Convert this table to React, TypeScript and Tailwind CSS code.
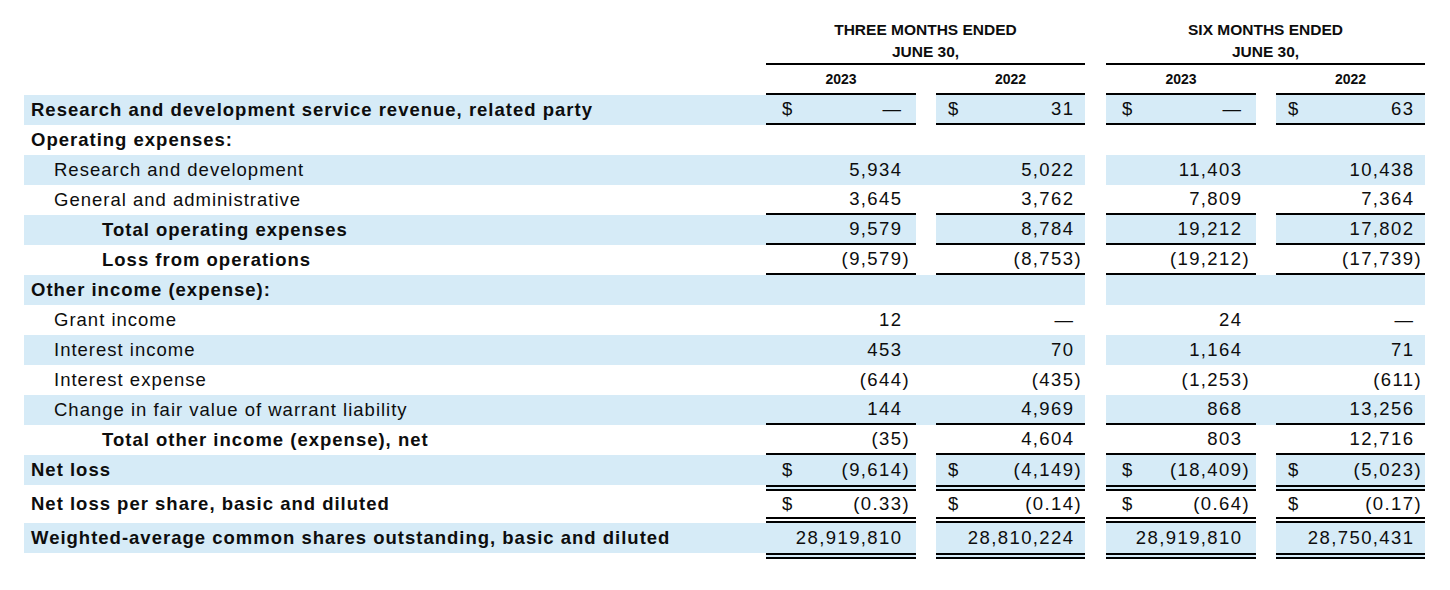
import React from 'react';

type Border = 'none' | 'single' | 'double';

type Row = {
  label: string;
  level: 0 | 1 | 2;
  bold?: boolean;
  blue?: boolean;
  dollar?: boolean;
  vals: string[];
  border?: Border;
  gapBlue?: boolean;
  h?: number;
};

const rows: Row[] = [
  { label: 'Research and development service revenue, related party', level: 0, bold: true, blue: true, dollar: true, vals: ['—', '31', '—', '63'], border: 'single' },
  { label: 'Operating expenses:', level: 0, bold: true, vals: [] },
  { label: 'Research and development', level: 1, blue: true, gapBlue: true, vals: ['5,934', '5,022', '11,403', '10,438'] },
  { label: 'General and administrative', level: 1, vals: ['3,645', '3,762', '7,809', '7,364'], border: 'single' },
  { label: 'Total operating expenses', level: 2, bold: true, blue: true, vals: ['9,579', '8,784', '19,212', '17,802'], border: 'single' },
  { label: 'Loss from operations', level: 2, bold: true, vals: ['(9,579)', '(8,753)', '(19,212)', '(17,739)'], border: 'single' },
  { label: 'Other income (expense):', level: 0, bold: true, blue: true, gapBlue: true, vals: [] },
  { label: 'Grant income', level: 1, vals: ['12', '—', '24', '—'] },
  { label: 'Interest income', level: 1, blue: true, gapBlue: true, vals: ['453', '70', '1,164', '71'] },
  { label: 'Interest expense', level: 1, vals: ['(644)', '(435)', '(1,253)', '(611)'] },
  { label: 'Change in fair value of warrant liability', level: 1, blue: true, gapBlue: true, vals: ['144', '4,969', '868', '13,256'], border: 'single' },
  { label: 'Total other income (expense), net', level: 2, bold: true, vals: ['(35)', '4,604', '803', '12,716'], border: 'single' },
  { label: 'Net loss', level: 0, bold: true, blue: true, dollar: true, vals: ['(9,614)', '(4,149)', '(18,409)', '(5,023)'], border: 'double' },
  { label: 'Net loss per share, basic and diluted', level: 0, bold: true, dollar: true, vals: ['(0.33)', '(0.14)', '(0.64)', '(0.17)'], border: 'double', h: 26 },
  { label: 'Weighted-average common shares outstanding, basic and diluted', level: 0, bold: true, blue: true, vals: ['28,919,810', '28,810,224', '28,919,810', '28,750,431'], border: 'double' },
];

// widths / paddings for the four number columns
const cols = [
  { w: 'w-[150px]', pl: 'pl-[16px]', pr: 'pr-[6px]' },
  { w: 'w-[149px]', pl: 'pl-[12px]', pr: 'pr-[3px]' },
  { w: 'w-[150px]', pl: 'pl-[16px]', pr: 'pr-[6px]' },
  { w: 'w-[149px]', pl: 'pl-[12px]', pr: 'pr-[3px]' },
];
const gaps = ['w-[20px]', 'w-[21px]', 'w-[20px]'];

const indent = ['pl-[7px]', 'pl-[30px]', 'pl-[78px]'];

const heights: Record<string, string> = {
  '30-none': 'h-[30px]',
  '30-single': 'h-[30px] border-b-2 border-black',
  '30-double': 'h-[36px] border-b-[6px] border-double border-black',
  '26-double': 'h-[32px] border-b-[6px] border-double border-black',
};

const contentH: Record<number, string> = { 30: 'h-[30px]', 26: 'h-[26px]' };

const Num = ({ v }: { v: string }) => (
  <span className="tracking-[1.4px]">
    {v}
    {!v.endsWith(')') && <span className="invisible">)</span>}
  </span>
);

const DataRow = ({ r }: { r: Row }) => {
  const h = r.h ?? 30;
  const cellCls = heights[`${h}-${r.border ?? 'none'}`];
  const bg = r.blue ? 'bg-[#d6ebf7]' : '';
  return (
    <div className="flex items-start">
      <div
        className={`w-[742px] ${contentH[h]} flex items-center ${indent[r.level]} ${bg} tracking-[1px] ${
          r.bold ? 'font-bold' : ''
        }`}
      >
        {r.label}
      </div>
      {cols.map((c, i) => (
        <React.Fragment key={i}>
          <div className={`${c.w} ${cellCls} ${bg} ${c.pl} ${c.pr} flex items-center justify-between`}>
            <span>{r.dollar ? '$' : ''}</span>
            {r.vals[i] && <Num v={r.vals[i]} />}
          </div>
          {i < 3 && <div className={`${gaps[i]} ${contentH[h]} ${r.gapBlue && i !== 1 ? bg : ''}`} />}
        </React.Fragment>
      ))}
    </div>
  );
};

const App = () => {
  return (
    <div className="w-[1450px] h-[590px] bg-white text-[#0d0d0d] font-['Liberation_Sans',Arial,sans-serif] text-[18.5px] leading-none">
      <div className="pl-[24px] flex flex-col">
        {/* Column group headers */}
        <div className="flex h-[65px]">
          <div className="w-[742px]" />
          <div className="w-[319px] border-b-2 border-black flex flex-col justify-end text-center font-bold text-[15.5px] leading-[22px]">
            <div>THREE MONTHS ENDED</div>
            <div>JUNE 30,</div>
          </div>
          <div className="w-[21px]" />
          <div className="w-[319px] border-b-2 border-black flex flex-col justify-end text-center font-bold text-[15.5px] leading-[22px]">
            <div>SIX MONTHS ENDED</div>
            <div>JUNE 30,</div>
          </div>
        </div>

        {/* Years */}
        <div className="flex h-[30px]">
          <div className="w-[742px]" />
          {cols.map((c, i) => (
            <React.Fragment key={i}>
              <div className={`${c.w} h-[30px] border-b-2 border-black flex items-center justify-center font-bold text-[14px]`}>
                {i % 2 === 0 ? '2023' : '2022'}
              </div>
              {i < 3 && <div className={gaps[i]} />}
            </React.Fragment>
          ))}
        </div>

        {rows.map((r, i) => (
          <DataRow key={i} r={r} />
        ))}
      </div>
    </div>
  );
};

export default App;
